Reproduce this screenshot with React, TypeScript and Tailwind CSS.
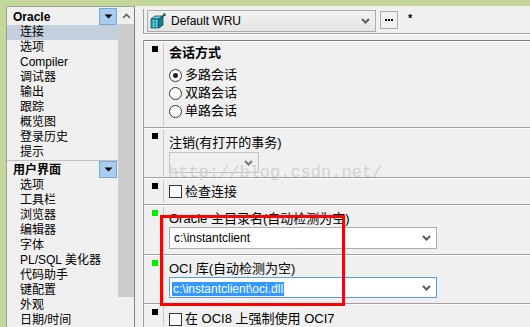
import React from "react";

// 偏好设置窗口 — 左侧分类列表 + 右侧属性行
const FONT = "font-['Liberation_Sans','Noto_Sans_CJK_SC',sans-serif]";

const oracleItems = ["连接", "选项", "Compiler", "调试器", "输出", "跟踪", "概览图", "登录历史", "提示"];
const uiItems = ["选项", "工具栏", "浏览器", "编辑器", "字体", "PL/SQL 美化器", "代码助手", "键配置", "外观", "日期/时间"];

function Chevron({ color = "#5a5a5a" }: { color?: string }) {
  return (
    <svg width="9" height="6" viewBox="0 0 9 6">
      <path d="M1 1 L4.5 4.5 L8 1" fill="none" stroke={color} strokeWidth="2" />
    </svg>
  );
}

function HeaderButton() {
  return (
    <div className="flex h-[17px] w-[18px] items-center justify-center border border-[#7aa7d8] bg-[#a9cdf1]">
      <svg width="9" height="5" viewBox="0 0 9 5">
        <path d="M0.5 0.5 H8.5 L4.5 4.5 Z" fill="#000" />
      </svg>
    </div>
  );
}

function GroupHeader({ title }: { title: string }) {
  return (
    <div className="flex items-center justify-between pl-[6px] pr-[1px]">
      <span className="text-[12px] font-bold leading-[16px] text-black">{title}</span>
      <HeaderButton />
    </div>
  );
}

function Marker({ green }: { green?: boolean }) {
  return (
    <div className="w-[19px] shrink-0 pl-[8px] pt-[4px]">
      <div className={`h-[6px] w-[6px] ${green ? "bg-[#00ee00]" : "bg-black"}`} />
    </div>
  );
}

function Row({
  h,
  green,
  children,
  center,
}: {
  h: string;
  green?: boolean;
  children: React.ReactNode;
  center?: boolean;
}) {
  return (
    <div className={`flex border-t border-b border-t-white border-b-[#a0a0a0] ${h}`}>
      <Marker green={green} />
      <div className="my-[1px] w-px bg-[#c8c8c8]" />
      <div className={`flex flex-1 flex-col pl-[5px] ${center ? "justify-center" : ""}`}>{children}</div>
    </div>
  );
}

function Radio({ checked, label }: { checked?: boolean; label: string }) {
  return (
    <div className="flex h-[18px] items-center gap-[3px]">
      <div className="flex h-[13px] w-[13px] items-center justify-center rounded-full border border-[#333] bg-white">
        {checked && <div className="h-[5px] w-[5px] rounded-full bg-[#222]" />}
      </div>
      <span className="text-[13px] leading-[16px]">{label}</span>
    </div>
  );
}

function Checkbox({ label }: { label: string }) {
  return (
    <div className="flex items-center gap-[3px]">
      <div className="h-[13px] w-[13px] border border-[#333] bg-white" />
      <span className="text-[13px] leading-[16px]">{label}</span>
    </div>
  );
}

function WruIcon() {
  return (
    <svg width="17" height="17" viewBox="0 0 17 17">
      <path d="M1 6 L5 3 L13 3 L9 6 Z" fill="#5fd6e0" stroke="#1d4f59" strokeWidth="0.8" />
      <path d="M1 6 H9 V15 H1 Z" fill="#21a9b8" stroke="#1d4f59" strokeWidth="0.8" />
      <path d="M9 6 L13 3 V12 L9 15 Z" fill="#16808c" stroke="#1d4f59" strokeWidth="0.8" />
      <path d="M3 8 H4 M6 8 H7 M3 11 H4 M6 11 H7 M3 13.5 H4 M6 13.5 H7" stroke="#dff" strokeWidth="1" />
      <path d="M11 5 L15 1 M13 1 H15 V3" stroke="#1d4f59" strokeWidth="1.2" fill="none" />
    </svg>
  );
}

export default function App() {
  return (
    <div className={`relative flex h-[327px] w-[530px] overflow-hidden bg-[#c4d79b] pl-[6px] pt-[6px] text-black ${FONT}`}>
      {/* 左侧分类列表 */}
      <div className="flex border-l border-t border-r border-l-[#a0a0a0] border-t-[#a0a0a0] border-r-[#808080] bg-[#f0f0f0]">
        <div className="flex w-[111px] flex-col">
          <div className="h-[20px] pt-[1px]">
            <GroupHeader title="Oracle" />
          </div>
          {oracleItems.map((t, i) => (
            <div
              key={t}
              className={`h-[15px] pl-[13px] text-[12px] leading-[15px] ${i === 0 ? "bg-[#c4d0dd]" : ""}`}
            >
              {t}
            </div>
          ))}
          <div className="h-[19px] border-t border-[#c0c0c0]">
            <GroupHeader title="用户界面" />
          </div>
          {uiItems.map((t) => (
            <div key={t} className="h-[15px] pl-[13px] text-[12px] leading-[15px]">
              {t}
            </div>
          ))}
        </div>
        <div className="flex w-[16px] flex-col">
          <div className="flex h-[17px] items-center justify-center">
            <svg width="9" height="6" viewBox="0 0 9 6">
              <path d="M1 5 L4.5 1.5 L8 5" fill="none" stroke="#606060" strokeWidth="1.6" />
            </svg>
          </div>
          <div className="h-[273px] bg-[#cdcdcd]" />
        </div>
      </div>

      {/* 右侧属性页 */}
      <div className="flex flex-1 flex-col bg-[#f0f0f0] pl-[8px]">
        <div className="h-[4px]" />
        <div className="flex h-[28px] items-start border-l border-b border-[#a0a0a0] pl-[3px]">
          <div className="mt-[1px] flex h-[22px] w-[229px] items-center border border-[#acacac] bg-gradient-to-b from-[#f2f2f2] to-[#e4e4e4] pl-[2px] pr-[5px]">
            <WruIcon />
            <span className="ml-[4px] flex-1 text-[12px]">Default WRU</span>
            <Chevron color="#606060" />
          </div>
          <div className="ml-[4px] mt-[2px] flex h-[18px] w-[18px] items-center justify-center gap-[1px] border border-[#adadad] bg-[#f0f0f0]">
            <div className="h-[2px] w-[2px] bg-black" />
            <div className="h-[2px] w-[2px] bg-black" />
            <div className="h-[2px] w-[2px] bg-black" />
          </div>
          <span className="ml-[10px] mt-[3px] text-[11px] font-bold leading-[12px]">*</span>
        </div>
        <div className="h-px bg-white" />
        <div className="h-[6px]" />
        <div className="flex flex-1 flex-col border-l border-t border-l-[#a0a0a0] border-t-[#808080]">
          <Row h="h-[87px]">
            <div className="pt-[3px] text-[13px] font-bold leading-[16px]">会话方式</div>
            <div className="mt-[5px] flex flex-col">
              <Radio checked label="多路会话" />
              <Radio label="双路会话" />
              <Radio label="单路会话" />
            </div>
          </Row>
          <Row h="h-[50px]">
            <div className="pt-[6px] text-[13px] leading-[16px]">注销(有打开的事务)</div>
            <div className="mt-[1px] flex h-[21px] w-[90px] items-center justify-end border border-[#c4c4c4] bg-[#efefef] pr-[5px]">
              <Chevron color="#7a7a7a" />
            </div>
          </Row>
          <Row h="h-[27px]" center>
            <Checkbox label="检查连接" />
          </Row>
          <Row h="h-[50px]" green>
            <div className="pt-[5px] text-[13px] leading-[16px]">Oracle 主目录名(自动检测为空)</div>
            <div className="flex h-[22px] w-[268px] items-center border border-[#acacac] bg-white pl-[4px] pr-[5px]">
              <span className="flex-1 text-[12px]">c:\instantclient</span>
              <Chevron />
            </div>
          </Row>
          <Row h="h-[49px]" green>
            <div className="pt-[5px] text-[13px] leading-[16px]">OCI 库(自动检测为空)</div>
            <div className="flex h-[21px] w-[268px] items-center border border-[#569de5] bg-white pl-[2px] pr-[5px]">
              <div className="flex-1">
                <span className="bg-[#3399ff] px-[1px] text-[12px] text-white">c:\instantclient\oci.dll</span>
              </div>
              <Chevron />
            </div>
          </Row>
          <div className="flex flex-1 border-t border-white">
            <Marker />
            <div className="my-[1px] w-px bg-[#c8c8c8]" />
            <div className="pl-[5px] pt-[6px]">
              <Checkbox label="在 OCI8 上强制使用 OCI7" />
            </div>
          </div>
        </div>
      </div>

      {/* 水印 */}
      <div className="pointer-events-none absolute left-[168px] top-[163px] font-['Liberation_Mono',monospace] text-[17px] leading-[20px] text-[#d2d2d2]">
        http://blog.csdn.net/
      </div>
      {/* 红框标注 */}
      <div className="pointer-events-none absolute left-[160px] top-[215px] h-[91px] w-[185px] border-[3px] border-[#ff0000]" />
    </div>
  );
}
